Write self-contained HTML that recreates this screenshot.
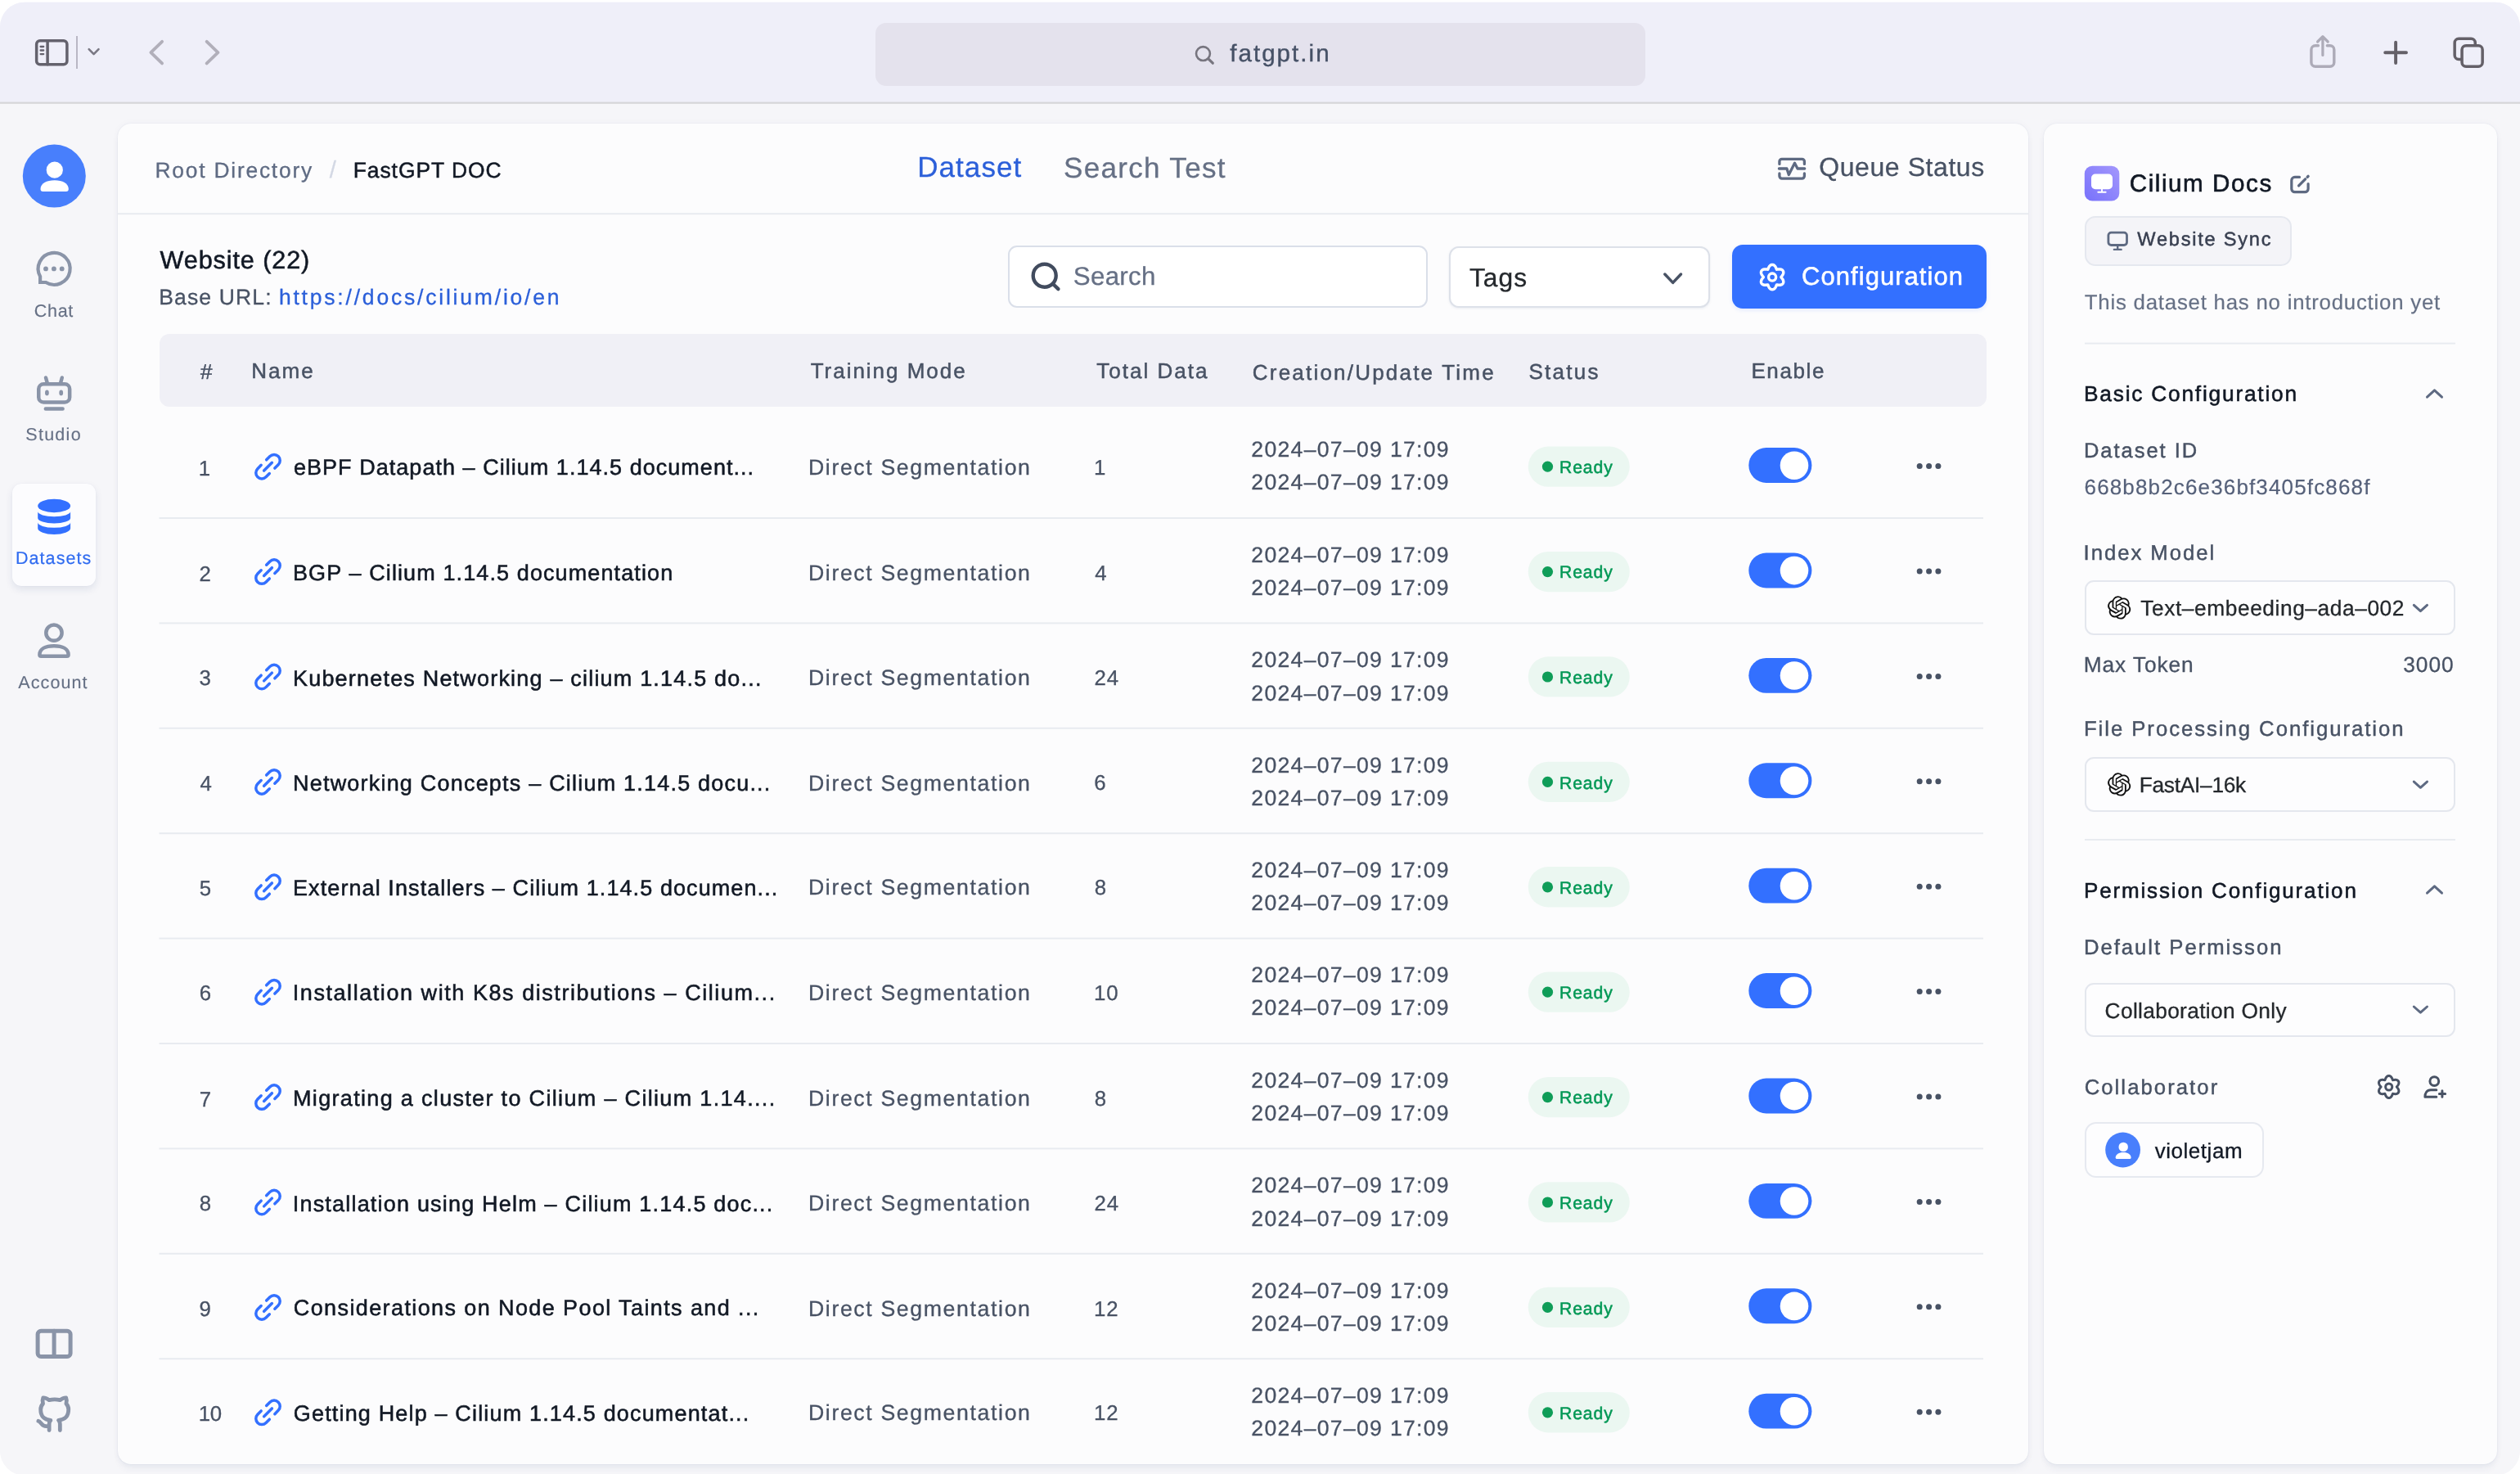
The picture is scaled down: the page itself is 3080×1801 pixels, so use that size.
<!DOCTYPE html>
<html lang="en"><head><meta charset="utf-8"><title>FastGPT Dataset</title>
<style>
html,body{margin:0;padding:0;}
body{width:3080px;height:1801px;overflow:hidden;background:#fff;position:relative;font-family:"Liberation Sans",sans-serif;}
.a{position:absolute;box-sizing:border-box;}
.t{position:absolute;white-space:nowrap;line-height:1em;font-family:"Liberation Sans",sans-serif;text-rendering:geometricPrecision;}
svg.ov{position:absolute;left:0;top:0;}
</style></head><body>
<svg class="ov" width="3080" height="1801" viewBox="0 0 3080 1801" fill="none">
<rect x="0" y="2.8" width="3080" height="1800" rx="30" fill="#f6f6f9"/>
<path d="M0 125.5V32.8A30 30 0 0 1 30 2.8H3050A30 30 0 0 1 3080 32.8V125.5Z" fill="#efeff9"/>
</svg>
<div class="a" style="left:1070px;top:28px;width:941px;height:77px;background:#e4e2ed;border-radius:13px;"></div>
<div class="a" style="left:93.1px;top:43.9px;width:2px;height:39.7px;background:#b9b7c4;"></div>
<div class="a" style="left:15.2px;top:591px;width:101.6px;height:125.4px;background:#fcfcfe;border-radius:11px;box-shadow:0 4px 10px rgba(19,51,107,.10),0 0 1px rgba(19,51,107,.08);"></div>
<div class="a" style="left:143.5px;top:151px;width:2335.5px;height:1637.5px;background:#fcfcfd;border-radius:16px;box-shadow:0 0 1.5px rgba(19,51,107,.11),0 7px 10px -2px rgba(19,51,107,.06),0 0 10px rgba(19,51,107,.035);"></div>
<div class="a" style="left:2498px;top:151px;width:554px;height:1637.5px;background:#fcfcfd;border-radius:16px;box-shadow:0 0 1.5px rgba(19,51,107,.11),0 7px 10px -2px rgba(19,51,107,.06),0 0 10px rgba(19,51,107,.035);"></div>
<div class="a" style="left:1232px;top:300.3px;width:512.5px;height:75.9px;background:#fff;border:2px solid #dadfe9;border-radius:11px;"></div>
<div class="a" style="left:1771.3px;top:300.5px;width:318.4px;height:75.5px;background:#fff;border:2px solid #dde1e9;border-radius:12px;box-shadow:0 1px 3px rgba(19,51,107,.08);"></div>
<div class="a" style="left:2117px;top:299.4px;width:311.4px;height:77.8px;background:#3370ff;border-radius:13px;box-shadow:0 2px 5px rgba(51,112,255,.13);"></div>
<div class="a" style="left:194.5px;top:407.5px;width:2233.5px;height:89.5px;background:#f0f0f6;border-radius:12px;"></div>
<div class="a" style="left:2548px;top:264px;width:253px;height:60.5px;background:#f4f4f8;border:2px solid #e5e8ef;border-radius:13px;"></div>
<div class="a" style="left:2548px;top:709px;width:452.7px;height:67px;background:#fdfdfe;border:2px solid #e4e7ee;border-radius:11px;"></div>
<div class="a" style="left:2548px;top:925px;width:452.7px;height:67px;background:#fdfdfe;border:2px solid #e4e7ee;border-radius:11px;"></div>
<div class="a" style="left:2548px;top:1200.6px;width:452.7px;height:66.6px;background:#fdfdfe;border:2px solid #e4e7ee;border-radius:11px;"></div>
<div class="a" style="left:2548.1px;top:1371.1px;width:218.6px;height:67.8px;background:#fdfdfe;border:2px solid #e6e9f0;border-radius:14px;"></div>
<svg class="ov" width="3080" height="1801" viewBox="0 0 3080 1801" fill="none" stroke-linecap="round" stroke-linejoin="round">
<rect x="0" y="124.6" width="3080" height="2.2" fill="#d6d6d9"/>
<rect x="44.65" y="49.75" width="37.25" height="29.1" rx="4.2" stroke="#64626d" stroke-width="3.5"/>
<path d="M58.1 49.75V78.85" stroke="#64626d" stroke-width="3.5"/>
<path d="M49.6 57H53.2M49.6 61.5H53.2M49.6 66.1H53.2" stroke="#64626d" stroke-width="2.3"/>
<path d="M108.7 60.2L114.6 66.1L120.5 60.2" stroke="#7a7884" stroke-width="2.6"/>
<path d="M198.1 50.8L184.4 64.1L198.1 77.4" stroke="#b1afba" stroke-width="3.8"/>
<path d="M252.7 50.8L266.4 64.1L252.7 77.4" stroke="#b1afba" stroke-width="3.8"/>
<circle cx="1470.45" cy="65.55" r="8.45" stroke="#77757f" stroke-width="2.6"/><path d="M1476.8 71.9L1482.3 77.2" stroke="#77757f" stroke-width="3.2"/>
<path d="M2833.4 55.8H2829.9a5 5 0 0 0-5 5V76.2a5 5 0 0 0 5 5H2847.8a5 5 0 0 0 5-5V60.8a5 5 0 0 0-5-5H2844.3" stroke="#adabb8" stroke-width="3.4"/>
<path d="M2838.9 45V67.5M2832.6 51L2838.9 44.7L2845.2 51" stroke="#adabb8" stroke-width="3.2"/>
<path d="M2915.2 64.2H2941M2928.1 51.8V77" stroke="#646068" stroke-width="3.9"/>
<rect x="3000.15" y="47.15" width="25.1" height="25.4" rx="5" stroke="#646068" stroke-width="3.5"/>
<rect x="3009.05" y="55.65" width="25.1" height="25.5" rx="5" stroke="#646068" stroke-width="3.5" fill="#efeff9"/>
<circle cx="66.3" cy="215.1" r="38.5" fill="#487ffc"/>
<circle cx="66.8" cy="207.7" r="10.1" fill="#fff"/>
<path d="M49.5 231C49.5 224 57 220.2 66.7 220.2C76.4 220.2 83.8 224 83.8 231a3 3 0 0 1-3 3H52.5a3 3 0 0 1-3-3Z" fill="#fff"/>
<path d="M49.1 337.8A19.5 19.5 0 1 1 56 345H49.1Z" stroke="#8a94a8" stroke-width="4.2" stroke-linejoin="miter"/>
<circle cx="56" cy="328.4" r="2.9" fill="#8a94a8"/>
<circle cx="65.9" cy="328.4" r="2.9" fill="#8a94a8"/>
<circle cx="75.7" cy="328.4" r="2.9" fill="#8a94a8"/>
<rect x="47.25" y="469.25" width="37.9" height="22.2" rx="6" stroke="#8a94a8" stroke-width="4.5"/>
<path d="M56 461.5L57.8 468M75.8 461.5L74 468M55.8 499.4H76.6" stroke="#8a94a8" stroke-width="4.5"/>
<ellipse cx="57.4" cy="479.9" rx="2.4" ry="3.4" fill="#8a94a8"/><ellipse cx="74.7" cy="479.9" rx="2.4" ry="3.4" fill="#8a94a8"/>
<ellipse cx="66.15" cy="618" rx="19.95" ry="8.15" fill="#3370ff"/>
<path d="M46.2 625.1A19.95 6.1 0 0 0 86.1 625.1V633A19.95 6.4 0 0 1 46.2 633Z" fill="#3370ff"/>
<path d="M46.2 638.3A19.95 6.5 0 0 0 86.1 638.3V645.5A19.95 7.4 0 0 1 46.2 645.5Z" fill="#3370ff"/>
<circle cx="65.95" cy="773.2" r="9.65" stroke="#8a94a8" stroke-width="4.5"/>
<path d="M48.4 800C48.4 793 55.5 789.3 66 789.3C76.5 789.3 83.6 793 83.6 800Q83.6 801.8 81.8 801.8H50.2Q48.4 801.8 48.4 800Z" stroke="#8a94a8" stroke-width="4.5"/>
<rect x="46.1" y="1626.3" width="40" height="31.2" rx="4" stroke="#8a94a8" stroke-width="5"/><path d="M66.1 1626.3V1657.5" stroke="#8a94a8" stroke-width="5"/>
<g transform="translate(43.1 1706) scale(1.89)" stroke="#8a94a8" stroke-width="2.55"><path d="M9 19c-5 1.5-5-2.5-7-3m14 6v-3.87a3.37 3.37 0 0 0-.94-2.61c3.14-.35 6.44-1.54 6.44-7A5.44 5.44 0 0 0 20 4.77 5.07 5.07 0 0 0 19.91 1S18.73.65 16 2.48a13.38 13.38 0 0 0-7 0C6.27.65 5.09 1 5.09 1A5.07 5.07 0 0 0 5 4.77a5.44 5.44 0 0 0-1.5 3.78c0 5.42 3.3 6.61 6.44 7A3.37 3.37 0 0 0 9 18.13V22"/></g>
<rect x="143.5" y="260.2" width="2335.5" height="2" fill="#e8ebf0"/>
<path d="M2174.9 200.4V197.3a3 3 0 0 1 3-3H2202.4a3 3 0 0 1 3 3V200.4M2174.9 211.9V215.1a3 3 0 0 0 3 3H2202.4a3 3 0 0 0 3-3V211.9M2174.4 206H2183.9L2186.3 213.5L2193.5 199.2L2197 206H2205.7" stroke="#5e6a82" stroke-width="3.3"/>
<circle cx="1276.7" cy="336.7" r="14" stroke="#414b5e" stroke-width="4.4"/><path d="M1287 347L1293.4 353.2" stroke="#414b5e" stroke-width="4.4"/>
<path d="M2034.8 335L2044.65 345.4L2054.5 335" stroke="#485264" stroke-width="3.5"/>
<path d="M2176.85 338.60L2177.42 339.34L2178.11 340.18L2178.77 341.12L2179.30 342.14L2179.66 343.20L2179.79 344.27L2179.67 345.29L2179.29 346.22L2178.68 347.00L2177.85 347.62L2176.86 348.04L2175.76 348.26L2174.61 348.31L2173.47 348.21L2172.40 348.03L2171.48 347.91L2171.12 348.77L2170.74 349.79L2170.25 350.83L2169.64 351.80L2168.89 352.64L2168.03 353.29L2167.09 353.69L2166.10 353.83L2165.11 353.69L2164.17 353.29L2163.31 352.64L2162.56 351.80L2161.95 350.83L2161.46 349.79L2161.08 348.77L2160.72 347.91L2159.80 348.03L2158.73 348.21L2157.59 348.31L2156.44 348.26L2155.34 348.04L2154.35 347.62L2153.52 347.00L2152.91 346.22L2152.53 345.29L2152.41 344.27L2152.54 343.20L2152.90 342.14L2153.43 341.12L2154.09 340.18L2154.78 339.34L2155.35 338.60L2154.78 337.86L2154.09 337.02L2153.43 336.08L2152.90 335.06L2152.54 334.00L2152.41 332.93L2152.53 331.91L2152.91 330.98L2153.52 330.20L2154.35 329.58L2155.34 329.16L2156.44 328.94L2157.59 328.89L2158.73 328.99L2159.80 329.17L2160.72 329.29L2161.08 328.43L2161.46 327.41L2161.95 326.37L2162.56 325.40L2163.31 324.56L2164.17 323.91L2165.11 323.51L2166.10 323.37L2167.09 323.51L2168.03 323.91L2168.89 324.56L2169.64 325.40L2170.25 326.37L2170.74 327.41L2171.12 328.43L2171.48 329.29L2172.40 329.17L2173.47 328.99L2174.61 328.89L2175.76 328.94L2176.86 329.16L2177.85 329.58L2178.68 330.20L2179.29 330.98L2179.67 331.91L2179.79 332.93L2179.66 334.00L2179.30 335.06L2178.77 336.08L2178.11 337.02L2177.42 337.86Z" stroke="#fff" stroke-width="3.4"/><circle cx="2166.1" cy="338.6" r="4.54" stroke="#fff" stroke-width="3.4"/>
<rect x="194.5" y="632.00" width="2229.5" height="2" fill="#e8ebf0"/>
<g transform="translate(327.5 570.20) rotate(-45)" stroke="#3370ff" stroke-width="3.5"><path d="M4.6 -7.2H10.65A7.2 7.2 0 0 1 10.65 7.2H4.6M-4.6 7.2H-10.65A7.2 7.2 0 0 1 -10.65 -7.2H-4.6M-6.9 0H6.9"/></g>
<rect x="1867.8" y="545.50" width="124" height="49.3" rx="24.65" fill="#ebf7f1"/>
<circle cx="1891.5" cy="570.20" r="6.6" fill="#0f9d58"/>
<rect x="2137.3" y="547.10" width="77.1" height="42.9" rx="21.45" fill="#3370ff"/>
<circle cx="2193" cy="568.70" r="17.3" fill="#fff"/>
<circle cx="2346.2" cy="569.60" r="3.5" fill="#485264"/>
<circle cx="2357.6" cy="569.60" r="3.5" fill="#485264"/>
<circle cx="2368.9" cy="569.60" r="3.5" fill="#485264"/>
<rect x="194.5" y="760.40" width="2229.5" height="2" fill="#e8ebf0"/>
<g transform="translate(327.5 698.60) rotate(-45)" stroke="#3370ff" stroke-width="3.5"><path d="M4.6 -7.2H10.65A7.2 7.2 0 0 1 10.65 7.2H4.6M-4.6 7.2H-10.65A7.2 7.2 0 0 1 -10.65 -7.2H-4.6M-6.9 0H6.9"/></g>
<rect x="1867.8" y="673.90" width="124" height="49.3" rx="24.65" fill="#ebf7f1"/>
<circle cx="1891.5" cy="698.60" r="6.6" fill="#0f9d58"/>
<rect x="2137.3" y="675.50" width="77.1" height="42.9" rx="21.45" fill="#3370ff"/>
<circle cx="2193" cy="697.10" r="17.3" fill="#fff"/>
<circle cx="2346.2" cy="698.00" r="3.5" fill="#485264"/>
<circle cx="2357.6" cy="698.00" r="3.5" fill="#485264"/>
<circle cx="2368.9" cy="698.00" r="3.5" fill="#485264"/>
<rect x="194.5" y="888.80" width="2229.5" height="2" fill="#e8ebf0"/>
<g transform="translate(327.5 827.00) rotate(-45)" stroke="#3370ff" stroke-width="3.5"><path d="M4.6 -7.2H10.65A7.2 7.2 0 0 1 10.65 7.2H4.6M-4.6 7.2H-10.65A7.2 7.2 0 0 1 -10.65 -7.2H-4.6M-6.9 0H6.9"/></g>
<rect x="1867.8" y="802.30" width="124" height="49.3" rx="24.65" fill="#ebf7f1"/>
<circle cx="1891.5" cy="827.00" r="6.6" fill="#0f9d58"/>
<rect x="2137.3" y="803.90" width="77.1" height="42.9" rx="21.45" fill="#3370ff"/>
<circle cx="2193" cy="825.50" r="17.3" fill="#fff"/>
<circle cx="2346.2" cy="826.40" r="3.5" fill="#485264"/>
<circle cx="2357.6" cy="826.40" r="3.5" fill="#485264"/>
<circle cx="2368.9" cy="826.40" r="3.5" fill="#485264"/>
<rect x="194.5" y="1017.20" width="2229.5" height="2" fill="#e8ebf0"/>
<g transform="translate(327.5 955.40) rotate(-45)" stroke="#3370ff" stroke-width="3.5"><path d="M4.6 -7.2H10.65A7.2 7.2 0 0 1 10.65 7.2H4.6M-4.6 7.2H-10.65A7.2 7.2 0 0 1 -10.65 -7.2H-4.6M-6.9 0H6.9"/></g>
<rect x="1867.8" y="930.70" width="124" height="49.3" rx="24.65" fill="#ebf7f1"/>
<circle cx="1891.5" cy="955.40" r="6.6" fill="#0f9d58"/>
<rect x="2137.3" y="932.30" width="77.1" height="42.9" rx="21.45" fill="#3370ff"/>
<circle cx="2193" cy="953.90" r="17.3" fill="#fff"/>
<circle cx="2346.2" cy="954.80" r="3.5" fill="#485264"/>
<circle cx="2357.6" cy="954.80" r="3.5" fill="#485264"/>
<circle cx="2368.9" cy="954.80" r="3.5" fill="#485264"/>
<rect x="194.5" y="1145.60" width="2229.5" height="2" fill="#e8ebf0"/>
<g transform="translate(327.5 1083.80) rotate(-45)" stroke="#3370ff" stroke-width="3.5"><path d="M4.6 -7.2H10.65A7.2 7.2 0 0 1 10.65 7.2H4.6M-4.6 7.2H-10.65A7.2 7.2 0 0 1 -10.65 -7.2H-4.6M-6.9 0H6.9"/></g>
<rect x="1867.8" y="1059.10" width="124" height="49.3" rx="24.65" fill="#ebf7f1"/>
<circle cx="1891.5" cy="1083.80" r="6.6" fill="#0f9d58"/>
<rect x="2137.3" y="1060.70" width="77.1" height="42.9" rx="21.45" fill="#3370ff"/>
<circle cx="2193" cy="1082.30" r="17.3" fill="#fff"/>
<circle cx="2346.2" cy="1083.20" r="3.5" fill="#485264"/>
<circle cx="2357.6" cy="1083.20" r="3.5" fill="#485264"/>
<circle cx="2368.9" cy="1083.20" r="3.5" fill="#485264"/>
<rect x="194.5" y="1274.00" width="2229.5" height="2" fill="#e8ebf0"/>
<g transform="translate(327.5 1212.20) rotate(-45)" stroke="#3370ff" stroke-width="3.5"><path d="M4.6 -7.2H10.65A7.2 7.2 0 0 1 10.65 7.2H4.6M-4.6 7.2H-10.65A7.2 7.2 0 0 1 -10.65 -7.2H-4.6M-6.9 0H6.9"/></g>
<rect x="1867.8" y="1187.50" width="124" height="49.3" rx="24.65" fill="#ebf7f1"/>
<circle cx="1891.5" cy="1212.20" r="6.6" fill="#0f9d58"/>
<rect x="2137.3" y="1189.10" width="77.1" height="42.9" rx="21.45" fill="#3370ff"/>
<circle cx="2193" cy="1210.70" r="17.3" fill="#fff"/>
<circle cx="2346.2" cy="1211.60" r="3.5" fill="#485264"/>
<circle cx="2357.6" cy="1211.60" r="3.5" fill="#485264"/>
<circle cx="2368.9" cy="1211.60" r="3.5" fill="#485264"/>
<rect x="194.5" y="1402.40" width="2229.5" height="2" fill="#e8ebf0"/>
<g transform="translate(327.5 1340.60) rotate(-45)" stroke="#3370ff" stroke-width="3.5"><path d="M4.6 -7.2H10.65A7.2 7.2 0 0 1 10.65 7.2H4.6M-4.6 7.2H-10.65A7.2 7.2 0 0 1 -10.65 -7.2H-4.6M-6.9 0H6.9"/></g>
<rect x="1867.8" y="1315.90" width="124" height="49.3" rx="24.65" fill="#ebf7f1"/>
<circle cx="1891.5" cy="1340.60" r="6.6" fill="#0f9d58"/>
<rect x="2137.3" y="1317.50" width="77.1" height="42.9" rx="21.45" fill="#3370ff"/>
<circle cx="2193" cy="1339.10" r="17.3" fill="#fff"/>
<circle cx="2346.2" cy="1340.00" r="3.5" fill="#485264"/>
<circle cx="2357.6" cy="1340.00" r="3.5" fill="#485264"/>
<circle cx="2368.9" cy="1340.00" r="3.5" fill="#485264"/>
<rect x="194.5" y="1530.80" width="2229.5" height="2" fill="#e8ebf0"/>
<g transform="translate(327.5 1469.00) rotate(-45)" stroke="#3370ff" stroke-width="3.5"><path d="M4.6 -7.2H10.65A7.2 7.2 0 0 1 10.65 7.2H4.6M-4.6 7.2H-10.65A7.2 7.2 0 0 1 -10.65 -7.2H-4.6M-6.9 0H6.9"/></g>
<rect x="1867.8" y="1444.30" width="124" height="49.3" rx="24.65" fill="#ebf7f1"/>
<circle cx="1891.5" cy="1469.00" r="6.6" fill="#0f9d58"/>
<rect x="2137.3" y="1445.90" width="77.1" height="42.9" rx="21.45" fill="#3370ff"/>
<circle cx="2193" cy="1467.50" r="17.3" fill="#fff"/>
<circle cx="2346.2" cy="1468.40" r="3.5" fill="#485264"/>
<circle cx="2357.6" cy="1468.40" r="3.5" fill="#485264"/>
<circle cx="2368.9" cy="1468.40" r="3.5" fill="#485264"/>
<rect x="194.5" y="1659.20" width="2229.5" height="2" fill="#e8ebf0"/>
<g transform="translate(327.5 1597.40) rotate(-45)" stroke="#3370ff" stroke-width="3.5"><path d="M4.6 -7.2H10.65A7.2 7.2 0 0 1 10.65 7.2H4.6M-4.6 7.2H-10.65A7.2 7.2 0 0 1 -10.65 -7.2H-4.6M-6.9 0H6.9"/></g>
<rect x="1867.8" y="1572.70" width="124" height="49.3" rx="24.65" fill="#ebf7f1"/>
<circle cx="1891.5" cy="1597.40" r="6.6" fill="#0f9d58"/>
<rect x="2137.3" y="1574.30" width="77.1" height="42.9" rx="21.45" fill="#3370ff"/>
<circle cx="2193" cy="1595.90" r="17.3" fill="#fff"/>
<circle cx="2346.2" cy="1596.80" r="3.5" fill="#485264"/>
<circle cx="2357.6" cy="1596.80" r="3.5" fill="#485264"/>
<circle cx="2368.9" cy="1596.80" r="3.5" fill="#485264"/>
<g transform="translate(327.5 1725.80) rotate(-45)" stroke="#3370ff" stroke-width="3.5"><path d="M4.6 -7.2H10.65A7.2 7.2 0 0 1 10.65 7.2H4.6M-4.6 7.2H-10.65A7.2 7.2 0 0 1 -10.65 -7.2H-4.6M-6.9 0H6.9"/></g>
<rect x="1867.8" y="1701.10" width="124" height="49.3" rx="24.65" fill="#ebf7f1"/>
<circle cx="1891.5" cy="1725.80" r="6.6" fill="#0f9d58"/>
<rect x="2137.3" y="1702.70" width="77.1" height="42.9" rx="21.45" fill="#3370ff"/>
<circle cx="2193" cy="1724.30" r="17.3" fill="#fff"/>
<circle cx="2346.2" cy="1725.20" r="3.5" fill="#485264"/>
<circle cx="2357.6" cy="1725.20" r="3.5" fill="#485264"/>
<circle cx="2368.9" cy="1725.20" r="3.5" fill="#485264"/>
<defs><linearGradient id="pg" x1="0" y1="1" x2="1" y2="0"><stop offset="0" stop-color="#7771fb"/><stop offset="1" stop-color="#a397fc"/></linearGradient></defs>
<rect x="2547.8" y="202.7" width="42.5" height="42.9" rx="9.5" fill="url(#pg)"/>
<rect x="2556" y="212.6" width="26" height="18.7" rx="5" fill="#fff"/><path d="M2569 231V234.7M2564.3 234.7H2573.7" stroke="#fff" stroke-width="1.9"/>
<path d="M2810.5 216.4H2804.8a4 4 0 0 0-4 4V230.7a4 4 0 0 0 4 4H2817.1a4 4 0 0 0 4-4V224.5" stroke="#5e6a82" stroke-width="3.2"/><path d="M2809.6 226.9L2817.6 218.9" stroke="#5e6a82" stroke-width="3.4"/><path d="M2820.2 216.3L2821.1 215.4" stroke="#5e6a82" stroke-width="3.4"/>
<rect x="2576.9" y="284.1" width="22.6" height="15.4" rx="3.5" stroke="#5e6a82" stroke-width="2.8"/><path d="M2588.2 300.9V304.8M2583.9 304.9H2592.6" stroke="#5e6a82" stroke-width="2.4"/>
<rect x="2548" y="418.6" width="453" height="2" fill="#e8ebf0"/>
<path d="M2966.5 485.2L2975.5 476.8L2984.5 485.2" stroke="#5e6a82" stroke-width="3"/>
<path transform="translate(2576 728.3) scale(1.1791666666666667)" d="M22.2819 9.8211a5.9847 5.9847 0 0 0-.5157-4.9108 6.0462 6.0462 0 0 0-6.5098-2.9A6.0651 6.0651 0 0 0 4.9807 4.1818a5.9847 5.9847 0 0 0-3.9977 2.9 6.0462 6.0462 0 0 0 .7427 7.0966 5.98 5.98 0 0 0 .511 4.9107 6.051 6.051 0 0 0 6.5146 2.9001A5.9847 5.9847 0 0 0 13.2599 24a6.0557 6.0557 0 0 0 5.7718-4.2058 5.9894 5.9894 0 0 0 3.9977-2.9001 6.0557 6.0557 0 0 0-.7475-7.0729zm-9.022 12.6081a4.4755 4.4755 0 0 1-2.8764-1.0408l.1419-.0804 4.7783-2.7582a.7948.7948 0 0 0 .3927-.6813v-6.7369l2.02 1.1686a.071.071 0 0 1 .038.052v5.5826a4.504 4.504 0 0 1-4.4945 4.4944zm-9.6607-4.1254a4.4708 4.4708 0 0 1-.5346-3.0137l.142.0852 4.783 2.7582a.7712.7712 0 0 0 .7806 0l5.8428-3.3685v2.3324a.0804.0804 0 0 1-.0332.0615L9.74 19.9502a4.4992 4.4992 0 0 1-6.1408-1.6464zM2.3408 7.8956a4.485 4.485 0 0 1 2.3655-1.9728V11.6a.7664.7664 0 0 0 .3879.6765l5.8144 3.3543-2.0201 1.1685a.0757.0757 0 0 1-.071 0l-4.8303-2.7865A4.504 4.504 0 0 1 2.3408 7.872zm16.5963 3.8558L13.1038 8.364 15.1192 7.2a.0757.0757 0 0 1 .071 0l4.8303 2.7913a4.4944 4.4944 0 0 1-.6765 8.1042v-5.6772a.79.79 0 0 0-.407-.667zm2.0107-3.0231l-.142-.0852-4.7735-2.7818a.7759.7759 0 0 0-.7854 0L9.409 9.2297V6.8974a.0662.0662 0 0 1 .0284-.0615l4.8303-2.7866a4.4992 4.4992 0 0 1 6.6802 4.66zM8.3065 12.863l-2.02-1.1638a.0804.0804 0 0 1-.038-.0567V6.0742a4.4992 4.4992 0 0 1 7.3757-3.4537l-.142.0805L8.704 5.459a.7948.7948 0 0 0-.3927.6813zm1.0976-2.3654l2.602-1.4998 2.6069 1.4998v2.9994l-2.5974 1.4997-2.6067-1.4997Z" fill="#111" stroke="none"/>
<path d="M2950.3 739.4L2958.4 746.6L2966.5 739.4" stroke="#5e6a82" stroke-width="3"/>
<path transform="translate(2576 944.3) scale(1.1791666666666667)" d="M22.2819 9.8211a5.9847 5.9847 0 0 0-.5157-4.9108 6.0462 6.0462 0 0 0-6.5098-2.9A6.0651 6.0651 0 0 0 4.9807 4.1818a5.9847 5.9847 0 0 0-3.9977 2.9 6.0462 6.0462 0 0 0 .7427 7.0966 5.98 5.98 0 0 0 .511 4.9107 6.051 6.051 0 0 0 6.5146 2.9001A5.9847 5.9847 0 0 0 13.2599 24a6.0557 6.0557 0 0 0 5.7718-4.2058 5.9894 5.9894 0 0 0 3.9977-2.9001 6.0557 6.0557 0 0 0-.7475-7.0729zm-9.022 12.6081a4.4755 4.4755 0 0 1-2.8764-1.0408l.1419-.0804 4.7783-2.7582a.7948.7948 0 0 0 .3927-.6813v-6.7369l2.02 1.1686a.071.071 0 0 1 .038.052v5.5826a4.504 4.504 0 0 1-4.4945 4.4944zm-9.6607-4.1254a4.4708 4.4708 0 0 1-.5346-3.0137l.142.0852 4.783 2.7582a.7712.7712 0 0 0 .7806 0l5.8428-3.3685v2.3324a.0804.0804 0 0 1-.0332.0615L9.74 19.9502a4.4992 4.4992 0 0 1-6.1408-1.6464zM2.3408 7.8956a4.485 4.485 0 0 1 2.3655-1.9728V11.6a.7664.7664 0 0 0 .3879.6765l5.8144 3.3543-2.0201 1.1685a.0757.0757 0 0 1-.071 0l-4.8303-2.7865A4.504 4.504 0 0 1 2.3408 7.872zm16.5963 3.8558L13.1038 8.364 15.1192 7.2a.0757.0757 0 0 1 .071 0l4.8303 2.7913a4.4944 4.4944 0 0 1-.6765 8.1042v-5.6772a.79.79 0 0 0-.407-.667zm2.0107-3.0231l-.142-.0852-4.7735-2.7818a.7759.7759 0 0 0-.7854 0L9.409 9.2297V6.8974a.0662.0662 0 0 1 .0284-.0615l4.8303-2.7866a4.4992 4.4992 0 0 1 6.6802 4.66zM8.3065 12.863l-2.02-1.1638a.0804.0804 0 0 1-.038-.0567V6.0742a4.4992 4.4992 0 0 1 7.3757-3.4537l-.142.0805L8.704 5.459a.7948.7948 0 0 0-.3927.6813zm1.0976-2.3654l2.602-1.4998 2.6069 1.4998v2.9994l-2.5974 1.4997-2.6067-1.4997Z" fill="#111" stroke="none"/>
<path d="M2950.3 955.1L2958.4 962.3000000000001L2966.5 955.1" stroke="#5e6a82" stroke-width="3"/>
<rect x="2548" y="1025" width="453" height="2" fill="#e8ebf0"/>
<path d="M2966.5 1091.2L2975.5 1082.8L2984.5 1091.2" stroke="#5e6a82" stroke-width="3"/>
<path d="M2950.3 1230.0L2958.4 1237.1999999999998L2966.5 1230.0" stroke="#5e6a82" stroke-width="3"/>
<path d="M2929.30 1328.00L2929.81 1328.66L2930.42 1329.41L2931.01 1330.25L2931.49 1331.16L2931.80 1332.11L2931.92 1333.06L2931.81 1333.97L2931.48 1334.80L2930.93 1335.50L2930.19 1336.05L2929.31 1336.43L2928.33 1336.63L2927.30 1336.67L2926.28 1336.58L2925.33 1336.42L2924.50 1336.31L2924.18 1337.08L2923.84 1337.99L2923.41 1338.92L2922.86 1339.79L2922.19 1340.54L2921.43 1341.11L2920.58 1341.48L2919.70 1341.60L2918.82 1341.48L2917.97 1341.11L2917.21 1340.54L2916.54 1339.79L2915.99 1338.92L2915.56 1337.99L2915.22 1337.08L2914.90 1336.31L2914.07 1336.42L2913.12 1336.58L2912.10 1336.67L2911.07 1336.63L2910.09 1336.43L2909.21 1336.05L2908.47 1335.50L2907.92 1334.80L2907.59 1333.97L2907.48 1333.06L2907.60 1332.11L2907.91 1331.16L2908.39 1330.25L2908.98 1329.41L2909.59 1328.66L2910.10 1328.00L2909.59 1327.34L2908.98 1326.59L2908.39 1325.75L2907.91 1324.84L2907.60 1323.89L2907.48 1322.94L2907.59 1322.03L2907.92 1321.20L2908.47 1320.50L2909.21 1319.95L2910.09 1319.57L2911.07 1319.37L2912.10 1319.33L2913.12 1319.42L2914.07 1319.58L2914.90 1319.69L2915.22 1318.92L2915.56 1318.01L2915.99 1317.08L2916.54 1316.21L2917.21 1315.46L2917.97 1314.89L2918.82 1314.52L2919.70 1314.40L2920.58 1314.52L2921.43 1314.89L2922.19 1315.46L2922.86 1316.21L2923.41 1317.08L2923.84 1318.01L2924.18 1318.92L2924.50 1319.69L2925.33 1319.58L2926.28 1319.42L2927.30 1319.33L2928.33 1319.37L2929.31 1319.57L2930.19 1319.95L2930.93 1320.50L2931.48 1321.20L2931.81 1322.03L2931.92 1322.94L2931.80 1323.89L2931.49 1324.84L2931.01 1325.75L2930.42 1326.59L2929.81 1327.34Z" stroke="#485264" stroke-width="3"/><circle cx="2919.7" cy="1328" r="4.05" stroke="#485264" stroke-width="3"/>
<circle cx="2975.3" cy="1321.1" r="5.4" stroke="#485264" stroke-width="3"/><path d="M2977.8 1331.8H2971C2966 1331.8 2963.9 1336 2963.9 1340.3H2977.8M2981.4 1336.4H2988.6M2984.9 1332.8V1340.2" stroke="#485264" stroke-width="3"/>
<circle cx="2594.6" cy="1405" r="21.4" fill="#487ffc"/><circle cx="2595.2" cy="1401.4" r="5.7" fill="#fff"/><path d="M2585.7 1414.4C2585.7 1410.3 2589.9 1407.9 2595.2 1407.9C2600.5 1407.9 2604.6 1410.3 2604.6 1414.4a1.6 1.6 0 0 1-1.6 1.6H2587.3a1.6 1.6 0 0 1-1.6-1.6Z" fill="#fff"/>
</svg>
<div id="tx" style="position:absolute;left:0;top:0;width:3080px;height:1801px;will-change:transform;">
<span class="t" style="left:1503.17px;top:51.34px;font-size:29.50px;letter-spacing:2.064px;color:#465166;-webkit-text-stroke:0.40px #465166;">fatgpt.in</span>
<span class="t" style="left:41.83px;top:369.82px;font-size:21.50px;letter-spacing:0.668px;color:#667085;-webkit-text-stroke:0.15px #667085;">Chat</span>
<span class="t" style="left:31.30px;top:520.83px;font-size:21.50px;letter-spacing:1.267px;color:#667085;-webkit-text-stroke:0.15px #667085;">Studio</span>
<span class="t" style="left:18.93px;top:672.10px;font-size:21.50px;letter-spacing:1.075px;color:#2f6bf0;-webkit-text-stroke:0.20px #2f6bf0;">Datasets</span>
<span class="t" style="left:22.32px;top:823.82px;font-size:21.50px;letter-spacing:1.078px;color:#667085;-webkit-text-stroke:0.15px #667085;">Account</span>
<span class="t" style="left:189.45px;top:195.07px;font-size:26.40px;letter-spacing:1.777px;color:#5f6b83;-webkit-text-stroke:0.30px #5f6b83;">Root Directory</span>
<span class="t" style="left:402.84px;top:194.07px;font-size:29.00px;letter-spacing:0.000px;color:#d3d8e4;-webkit-text-stroke:0.30px #d3d8e4;">/</span>
<span class="t" style="left:431.64px;top:195.43px;font-size:26.40px;letter-spacing:0.992px;color:#111824;-webkit-text-stroke:0.50px #111824;">FastGPT DOC</span>
<span class="t" style="left:1121.26px;top:187.41px;font-size:35.00px;letter-spacing:1.050px;color:#2b5fd9;-webkit-text-stroke:0.30px #2b5fd9;">Dataset</span>
<span class="t" style="left:1300.05px;top:188.15px;font-size:35.00px;letter-spacing:1.326px;color:#667085;-webkit-text-stroke:0.30px #667085;">Search Test</span>
<span class="t" style="left:2223.19px;top:188.20px;font-size:32.00px;letter-spacing:0.579px;color:#485264;-webkit-text-stroke:0.30px #485264;">Queue Status</span>
<span class="t" style="left:195.54px;top:302.79px;font-size:30.60px;letter-spacing:0.894px;color:#111824;-webkit-text-stroke:0.55px #111824;">Website (22)</span>
<span class="t" style="left:194.23px;top:350.10px;font-size:26.50px;letter-spacing:1.148px;color:#485264;-webkit-text-stroke:0.30px #485264;">Base URL:</span>
<span class="t" style="left:340.93px;top:350.05px;font-size:26.50px;letter-spacing:2.800px;color:#2b5fd9;-webkit-text-stroke:0.30px #2b5fd9;">https://docs/cilium/io/en</span>
<span class="t" style="left:1311.81px;top:322.47px;font-size:31.30px;letter-spacing:0.297px;color:#667085;-webkit-text-stroke:0.30px #667085;">Search</span>
<span class="t" style="left:1796.00px;top:324.21px;font-size:31.80px;letter-spacing:0.960px;color:#24282c;-webkit-text-stroke:0.30px #24282c;">Tags</span>
<span class="t" style="left:2202.10px;top:322.34px;font-size:31.00px;letter-spacing:1.035px;color:#fff;-webkit-text-stroke:0.55px #fff;">Configuration</span>
<span class="t" style="left:244.90px;top:441.14px;font-size:26.00px;letter-spacing:0.000px;color:#485264;-webkit-text-stroke:0.50px #485264;">#</span>
<span class="t" style="left:307.15px;top:440.19px;font-size:26.00px;letter-spacing:2.034px;color:#485264;-webkit-text-stroke:0.50px #485264;">Name</span>
<span class="t" style="left:990.71px;top:439.96px;font-size:26.00px;letter-spacing:1.976px;color:#485264;-webkit-text-stroke:0.50px #485264;">Training Mode</span>
<span class="t" style="left:1340.28px;top:440.16px;font-size:26.00px;letter-spacing:2.021px;color:#485264;-webkit-text-stroke:0.50px #485264;">Total Data</span>
<span class="t" style="left:1530.79px;top:441.50px;font-size:26.00px;letter-spacing:2.210px;color:#485264;-webkit-text-stroke:0.50px #485264;">Creation/Update Time</span>
<span class="t" style="left:1868.41px;top:441.13px;font-size:26.00px;letter-spacing:2.271px;color:#485264;-webkit-text-stroke:0.50px #485264;">Status</span>
<span class="t" style="left:2140.41px;top:440.16px;font-size:26.00px;letter-spacing:1.622px;color:#485264;-webkit-text-stroke:0.50px #485264;">Enable</span>
<span class="t" style="left:242.73px;top:560.90px;font-size:25.80px;letter-spacing:0.000px;color:#485264;-webkit-text-stroke:0.30px #485264;">1</span>
<span class="t" style="left:358.99px;top:558.33px;font-size:27.00px;letter-spacing:1.032px;color:#111824;-webkit-text-stroke:0.55px #111824;">eBPF Datapath – Cilium 1.14.5 document...</span>
<span class="t" style="left:987.95px;top:557.93px;font-size:26.70px;letter-spacing:1.623px;color:#485264;-webkit-text-stroke:0.30px #485264;">Direct Segmentation</span>
<span class="t" style="left:1336.92px;top:559.89px;font-size:25.80px;letter-spacing:0.900px;color:#485264;-webkit-text-stroke:0.30px #485264;">1</span>
<span class="t" style="left:1529.35px;top:536.02px;font-size:26.60px;letter-spacing:1.295px;color:#485264;-webkit-text-stroke:0.30px #485264;">2024–07–09 17:09</span>
<span class="t" style="left:1529.35px;top:576.42px;font-size:26.60px;letter-spacing:1.295px;color:#485264;-webkit-text-stroke:0.30px #485264;">2024–07–09 17:09</span>
<span class="t" style="left:1905.89px;top:560.73px;font-size:21.20px;letter-spacing:0.957px;color:#039855;-webkit-text-stroke:0.50px #039855;">Ready</span>
<span class="t" style="left:243.61px;top:689.56px;font-size:25.80px;letter-spacing:0.000px;color:#485264;-webkit-text-stroke:0.30px #485264;">2</span>
<span class="t" style="left:358.00px;top:686.91px;font-size:27.00px;letter-spacing:1.107px;color:#111824;-webkit-text-stroke:0.55px #111824;">BGP – Cilium 1.14.5 documentation</span>
<span class="t" style="left:987.95px;top:686.53px;font-size:26.70px;letter-spacing:1.623px;color:#485264;-webkit-text-stroke:0.30px #485264;">Direct Segmentation</span>
<span class="t" style="left:1338.13px;top:688.50px;font-size:25.80px;letter-spacing:0.900px;color:#485264;-webkit-text-stroke:0.30px #485264;">4</span>
<span class="t" style="left:1529.35px;top:664.62px;font-size:26.60px;letter-spacing:1.295px;color:#485264;-webkit-text-stroke:0.30px #485264;">2024–07–09 17:09</span>
<span class="t" style="left:1529.35px;top:705.02px;font-size:26.60px;letter-spacing:1.295px;color:#485264;-webkit-text-stroke:0.30px #485264;">2024–07–09 17:09</span>
<span class="t" style="left:1905.89px;top:689.33px;font-size:21.20px;letter-spacing:0.957px;color:#039855;-webkit-text-stroke:0.50px #039855;">Ready</span>
<span class="t" style="left:243.61px;top:817.21px;font-size:25.80px;letter-spacing:0.000px;color:#485264;-webkit-text-stroke:0.30px #485264;">3</span>
<span class="t" style="left:358.00px;top:815.63px;font-size:27.00px;letter-spacing:1.193px;color:#111824;-webkit-text-stroke:0.55px #111824;">Kubernetes Networking – cilium 1.14.5 do...</span>
<span class="t" style="left:987.95px;top:815.13px;font-size:26.70px;letter-spacing:1.623px;color:#485264;-webkit-text-stroke:0.30px #485264;">Direct Segmentation</span>
<span class="t" style="left:1337.49px;top:817.16px;font-size:25.80px;letter-spacing:0.900px;color:#485264;-webkit-text-stroke:0.30px #485264;">24</span>
<span class="t" style="left:1529.35px;top:793.22px;font-size:26.60px;letter-spacing:1.295px;color:#485264;-webkit-text-stroke:0.30px #485264;">2024–07–09 17:09</span>
<span class="t" style="left:1529.35px;top:833.62px;font-size:26.60px;letter-spacing:1.295px;color:#485264;-webkit-text-stroke:0.30px #485264;">2024–07–09 17:09</span>
<span class="t" style="left:1905.89px;top:817.93px;font-size:21.20px;letter-spacing:0.957px;color:#039855;-webkit-text-stroke:0.50px #039855;">Ready</span>
<span class="t" style="left:244.52px;top:945.69px;font-size:25.80px;letter-spacing:0.000px;color:#485264;-webkit-text-stroke:0.30px #485264;">4</span>
<span class="t" style="left:358.00px;top:944.17px;font-size:27.00px;letter-spacing:1.204px;color:#111824;-webkit-text-stroke:0.55px #111824;">Networking Concepts – Cilium 1.14.5 docu...</span>
<span class="t" style="left:987.95px;top:943.73px;font-size:26.70px;letter-spacing:1.623px;color:#485264;-webkit-text-stroke:0.30px #485264;">Direct Segmentation</span>
<span class="t" style="left:1337.37px;top:944.91px;font-size:25.80px;letter-spacing:0.900px;color:#485264;-webkit-text-stroke:0.30px #485264;">6</span>
<span class="t" style="left:1529.35px;top:921.82px;font-size:26.60px;letter-spacing:1.295px;color:#485264;-webkit-text-stroke:0.30px #485264;">2024–07–09 17:09</span>
<span class="t" style="left:1529.35px;top:962.22px;font-size:26.60px;letter-spacing:1.295px;color:#485264;-webkit-text-stroke:0.30px #485264;">2024–07–09 17:09</span>
<span class="t" style="left:1905.89px;top:946.53px;font-size:21.20px;letter-spacing:0.957px;color:#039855;-webkit-text-stroke:0.50px #039855;">Ready</span>
<span class="t" style="left:243.75px;top:1074.39px;font-size:25.80px;letter-spacing:0.000px;color:#485264;-webkit-text-stroke:0.30px #485264;">5</span>
<span class="t" style="left:358.00px;top:1071.72px;font-size:27.00px;letter-spacing:1.089px;color:#111824;-webkit-text-stroke:0.55px #111824;">External Installers – Cilium 1.14.5 documen...</span>
<span class="t" style="left:987.95px;top:1071.33px;font-size:26.70px;letter-spacing:1.623px;color:#485264;-webkit-text-stroke:0.30px #485264;">Direct Segmentation</span>
<span class="t" style="left:1337.67px;top:1073.41px;font-size:25.80px;letter-spacing:0.900px;color:#485264;-webkit-text-stroke:0.30px #485264;">8</span>
<span class="t" style="left:1529.35px;top:1050.42px;font-size:26.60px;letter-spacing:1.295px;color:#485264;-webkit-text-stroke:0.30px #485264;">2024–07–09 17:09</span>
<span class="t" style="left:1529.35px;top:1089.82px;font-size:26.60px;letter-spacing:1.295px;color:#485264;-webkit-text-stroke:0.30px #485264;">2024–07–09 17:09</span>
<span class="t" style="left:1905.89px;top:1075.13px;font-size:21.20px;letter-spacing:0.957px;color:#039855;-webkit-text-stroke:0.50px #039855;">Ready</span>
<span class="t" style="left:243.66px;top:1202.06px;font-size:25.80px;letter-spacing:0.000px;color:#485264;-webkit-text-stroke:0.30px #485264;">6</span>
<span class="t" style="left:357.77px;top:1200.33px;font-size:27.00px;letter-spacing:1.558px;color:#111824;-webkit-text-stroke:0.55px #111824;">Installation with K8s distributions – Cilium...</span>
<span class="t" style="left:987.95px;top:1199.93px;font-size:26.70px;letter-spacing:1.623px;color:#485264;-webkit-text-stroke:0.30px #485264;">Direct Segmentation</span>
<span class="t" style="left:1336.92px;top:1202.09px;font-size:25.80px;letter-spacing:0.900px;color:#485264;-webkit-text-stroke:0.30px #485264;">10</span>
<span class="t" style="left:1529.35px;top:1178.02px;font-size:26.60px;letter-spacing:1.295px;color:#485264;-webkit-text-stroke:0.30px #485264;">2024–07–09 17:09</span>
<span class="t" style="left:1529.35px;top:1218.42px;font-size:26.60px;letter-spacing:1.295px;color:#485264;-webkit-text-stroke:0.30px #485264;">2024–07–09 17:09</span>
<span class="t" style="left:1905.89px;top:1202.73px;font-size:21.20px;letter-spacing:0.957px;color:#039855;-webkit-text-stroke:0.50px #039855;">Ready</span>
<span class="t" style="left:243.66px;top:1331.50px;font-size:25.80px;letter-spacing:0.000px;color:#485264;-webkit-text-stroke:0.30px #485264;">7</span>
<span class="t" style="left:358.00px;top:1329.04px;font-size:27.00px;letter-spacing:1.326px;color:#111824;-webkit-text-stroke:0.55px #111824;">Migrating a cluster to Cilium – Cilium 1.14....</span>
<span class="t" style="left:987.95px;top:1328.53px;font-size:26.70px;letter-spacing:1.623px;color:#485264;-webkit-text-stroke:0.30px #485264;">Direct Segmentation</span>
<span class="t" style="left:1337.67px;top:1330.61px;font-size:25.80px;letter-spacing:0.900px;color:#485264;-webkit-text-stroke:0.30px #485264;">8</span>
<span class="t" style="left:1529.35px;top:1306.62px;font-size:26.60px;letter-spacing:1.295px;color:#485264;-webkit-text-stroke:0.30px #485264;">2024–07–09 17:09</span>
<span class="t" style="left:1529.35px;top:1347.02px;font-size:26.60px;letter-spacing:1.295px;color:#485264;-webkit-text-stroke:0.30px #485264;">2024–07–09 17:09</span>
<span class="t" style="left:1905.89px;top:1331.33px;font-size:21.20px;letter-spacing:0.957px;color:#039855;-webkit-text-stroke:0.50px #039855;">Ready</span>
<span class="t" style="left:243.69px;top:1459.24px;font-size:25.80px;letter-spacing:0.000px;color:#485264;-webkit-text-stroke:0.30px #485264;">8</span>
<span class="t" style="left:357.77px;top:1457.64px;font-size:27.00px;letter-spacing:1.195px;color:#111824;-webkit-text-stroke:0.55px #111824;">Installation using Helm – Cilium 1.14.5 doc...</span>
<span class="t" style="left:987.95px;top:1457.13px;font-size:26.70px;letter-spacing:1.623px;color:#485264;-webkit-text-stroke:0.30px #485264;">Direct Segmentation</span>
<span class="t" style="left:1337.49px;top:1459.16px;font-size:25.80px;letter-spacing:0.900px;color:#485264;-webkit-text-stroke:0.30px #485264;">24</span>
<span class="t" style="left:1529.35px;top:1435.22px;font-size:26.60px;letter-spacing:1.295px;color:#485264;-webkit-text-stroke:0.30px #485264;">2024–07–09 17:09</span>
<span class="t" style="left:1529.35px;top:1475.62px;font-size:26.60px;letter-spacing:1.295px;color:#485264;-webkit-text-stroke:0.30px #485264;">2024–07–09 17:09</span>
<span class="t" style="left:1905.89px;top:1459.93px;font-size:21.20px;letter-spacing:0.957px;color:#039855;-webkit-text-stroke:0.50px #039855;">Ready</span>
<span class="t" style="left:243.57px;top:1587.80px;font-size:25.80px;letter-spacing:0.000px;color:#485264;-webkit-text-stroke:0.30px #485264;">9</span>
<span class="t" style="left:358.78px;top:1585.12px;font-size:27.00px;letter-spacing:1.396px;color:#111824;-webkit-text-stroke:0.55px #111824;">Considerations on Node Pool Taints and ...</span>
<span class="t" style="left:987.95px;top:1585.73px;font-size:26.70px;letter-spacing:1.623px;color:#485264;-webkit-text-stroke:0.30px #485264;">Direct Segmentation</span>
<span class="t" style="left:1336.92px;top:1587.76px;font-size:25.80px;letter-spacing:0.900px;color:#485264;-webkit-text-stroke:0.30px #485264;">12</span>
<span class="t" style="left:1529.35px;top:1563.82px;font-size:26.60px;letter-spacing:1.295px;color:#485264;-webkit-text-stroke:0.30px #485264;">2024–07–09 17:09</span>
<span class="t" style="left:1529.35px;top:1604.22px;font-size:26.60px;letter-spacing:1.295px;color:#485264;-webkit-text-stroke:0.30px #485264;">2024–07–09 17:09</span>
<span class="t" style="left:1905.89px;top:1588.53px;font-size:21.20px;letter-spacing:0.957px;color:#039855;-webkit-text-stroke:0.50px #039855;">Ready</span>
<span class="t" style="left:242.73px;top:1716.46px;font-size:25.80px;letter-spacing:-0.424px;color:#485264;-webkit-text-stroke:0.30px #485264;">10</span>
<span class="t" style="left:358.80px;top:1713.75px;font-size:27.00px;letter-spacing:1.162px;color:#111824;-webkit-text-stroke:0.55px #111824;">Getting Help – Cilium 1.14.5 documentat...</span>
<span class="t" style="left:987.95px;top:1713.33px;font-size:26.70px;letter-spacing:1.623px;color:#485264;-webkit-text-stroke:0.30px #485264;">Direct Segmentation</span>
<span class="t" style="left:1336.92px;top:1715.36px;font-size:25.80px;letter-spacing:0.900px;color:#485264;-webkit-text-stroke:0.30px #485264;">12</span>
<span class="t" style="left:1529.35px;top:1692.42px;font-size:26.60px;letter-spacing:1.295px;color:#485264;-webkit-text-stroke:0.30px #485264;">2024–07–09 17:09</span>
<span class="t" style="left:1529.35px;top:1731.82px;font-size:26.60px;letter-spacing:1.295px;color:#485264;-webkit-text-stroke:0.30px #485264;">2024–07–09 17:09</span>
<span class="t" style="left:1905.89px;top:1717.13px;font-size:21.20px;letter-spacing:0.957px;color:#039855;-webkit-text-stroke:0.50px #039855;">Ready</span>
<span class="t" style="left:2602.78px;top:209.94px;font-size:29.60px;letter-spacing:1.559px;color:#111824;-webkit-text-stroke:0.60px #111824;">Cilium Docs</span>
<span class="t" style="left:2612.33px;top:282.22px;font-size:23.60px;letter-spacing:1.764px;color:#383f50;-webkit-text-stroke:0.50px #383f50;">Website Sync</span>
<span class="t" style="left:2547.80px;top:357.88px;font-size:25.80px;letter-spacing:0.776px;color:#667085;-webkit-text-stroke:0.20px #667085;">This dataset has no introduction yet</span>
<span class="t" style="left:2546.97px;top:468.13px;font-size:26.30px;letter-spacing:1.782px;color:#111824;-webkit-text-stroke:0.55px #111824;">Basic Configuration</span>
<span class="t" style="left:2546.93px;top:539.43px;font-size:25.50px;letter-spacing:1.968px;color:#485264;-webkit-text-stroke:0.45px #485264;">Dataset ID</span>
<span class="t" style="left:2547.52px;top:582.39px;font-size:26.00px;letter-spacing:1.151px;color:#56617a;-webkit-text-stroke:0.20px #56617a;">668b8b2c6e36bf3405fc868f</span>
<span class="t" style="left:2546.62px;top:663.50px;font-size:25.70px;letter-spacing:1.964px;color:#485264;-webkit-text-stroke:0.45px #485264;">Index Model</span>
<span class="t" style="left:2616.31px;top:730.36px;font-size:26.30px;letter-spacing:0.578px;color:#24282c;-webkit-text-stroke:0.30px #24282c;">Text–embeeding–ada–002</span>
<span class="t" style="left:2546.65px;top:799.39px;font-size:26.30px;letter-spacing:0.918px;color:#485264;-webkit-text-stroke:0.30px #485264;">Max Token</span>
<span class="t" style="left:2937.18px;top:799.07px;font-size:26.30px;letter-spacing:0.983px;color:#485264;-webkit-text-stroke:0.30px #485264;">3000</span>
<span class="t" style="left:2546.90px;top:879.35px;font-size:25.70px;letter-spacing:1.968px;color:#485264;-webkit-text-stroke:0.45px #485264;">File Processing Configuration</span>
<span class="t" style="left:2614.65px;top:946.15px;font-size:26.30px;letter-spacing:-0.268px;color:#24282c;-webkit-text-stroke:0.30px #24282c;">FastAI–16k</span>
<span class="t" style="left:2547.01px;top:1074.79px;font-size:26.00px;letter-spacing:1.843px;color:#111824;-webkit-text-stroke:0.55px #111824;">Permission Configuration</span>
<span class="t" style="left:2546.90px;top:1146.40px;font-size:25.70px;letter-spacing:1.982px;color:#485264;-webkit-text-stroke:0.45px #485264;">Default Permisson</span>
<span class="t" style="left:2572.62px;top:1221.51px;font-size:26.30px;letter-spacing:0.332px;color:#24282c;-webkit-text-stroke:0.30px #24282c;">Collaboration Only</span>
<span class="t" style="left:2547.66px;top:1317.12px;font-size:25.70px;letter-spacing:2.057px;color:#485264;-webkit-text-stroke:0.45px #485264;">Collaborator</span>
<span class="t" style="left:2633.68px;top:1392.94px;font-size:26.00px;letter-spacing:0.540px;color:#111824;-webkit-text-stroke:0.30px #111824;">violetjam</span>
</div>
<script>(function(){var w=window.innerWidth;if(w&&Math.abs(w-3080)>2){document.body.style.zoom=w/3080;}})();</script>
</body></html>
